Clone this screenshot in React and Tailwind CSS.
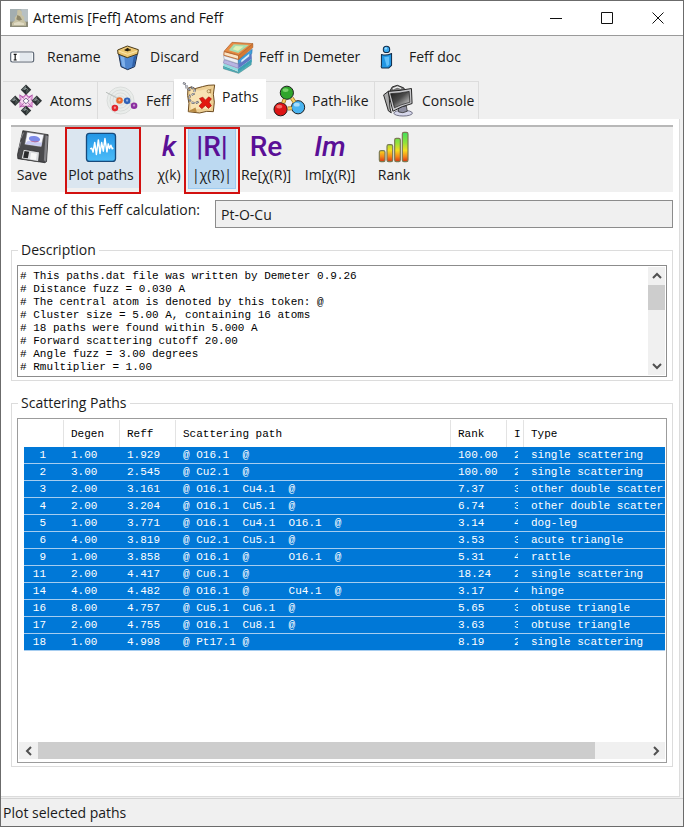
import React from "react";

const UI = "font-['Open_Sans','Noto_Sans',sans-serif]";
const MONO = "font-['Liberation_Mono',monospace]";

function AppIcon() {
  return (
    <svg viewBox="0 0 54 54" className="h-[18px] w-[18px]" aria-hidden="true">
      <rect width="54" height="54" fill="#a3aeb0" />
      <rect x="34" width="20" height="54" fill="#b7c0c3" />
      <rect y="38" width="54" height="16" fill="#8b8a78" />
      <path d="M22 4l8-2 6 7-1 8 8 7-1 9 6 8v9H6v-8l9-8-1-8 7-8z" fill="#c8c2a4" />
      <path d="M22 18l8 4 6 10-9 3-8-4z" fill="#8e876a" />
      <path d="M12 42l14-4 16 5v5H12z" fill="#e0dbc4" />
    </svg>
  );
}

function RenameIcon() {
  return (
    <svg viewBox="24 150 78 42" className="h-[14px] w-[26px]" aria-hidden="true">
      <rect x="29" y="156" width="69" height="30" rx="5" fill="#fff" stroke="#5b6573" strokeWidth="3.5" />
      <path d="M56 159h38v24H56z" fill="#e4e9ee" />
      <path d="M38 163h9M38 180h9M42.500 163v17" stroke="#111" strokeWidth="3.500" />
    </svg>
  );
}

function DiscardIcon() {
  return (
    <svg viewBox="345 130 72 81" className="h-[27px] w-[24px]" aria-hidden="true">
      <path d="M353 160l7 38 20 9 21-9 8-38z" fill="#4f86cf" stroke="#1c2f52" strokeWidth="3" />
      <path d="M358 166l6 30 9 5-3-32z" fill="#7fb0ea" />
      <path d="M398 168l-5 31 7-4 6-31z" fill="#2f5fa5" />
      <path d="M350 148l29-12 33 11-2 13-31 11-28-11z" fill="#edc873" stroke="#4a3a18" strokeWidth="3" />
      <path d="M353 151l27 10 29-10" fill="none" stroke="#fbe7ae" strokeWidth="3" />
      <ellipse cx="380" cy="148" rx="10" ry="3.500" fill="#5c4a1f" />
      <path d="M378 141l6 3-3 8-8-2z" fill="#241b0a" />
    </svg>
  );
}

function BooksIcon() {
  return (
    <svg viewBox="36 30 96 100" className="h-[33px] w-[32px]" aria-hidden="true">
      <path d="M40 106l44 18 40-30v8l-38 26-46-14z" fill="#4bb6bd" stroke="#35727d" strokeWidth="1.500" />
      <path d="M40 98l44 16v8l-44-16z" fill="#8fdde0" />
      <path d="M84 114l42-30v10l-42 30z" fill="#3c9fb5" />
      <path d="M42 86l43 14v13l-45-16z" fill="#b8b4e2" stroke="#6a659f" strokeWidth="1.500" />
      <path d="M85 100l40-32 1 16-41 29z" fill="#5d78c4" />
      <path d="M40 74l45 13v12l-43-14z" fill="#eef0f5" stroke="#7c8ba1" strokeWidth="1.500" />
      <path d="M85 87l42-32-1 13-41 31z" fill="#3d9fdb" stroke="#2366a1" strokeWidth="1.500" />
      <path d="M94 88l24-19v7l-24 19z" fill="#d8ecfa" />
      <path d="M42 62l44 12v12L41 73z" fill="#fae4c4" stroke="#b55a20" strokeWidth="2.500" />
      <path d="M86 74l43-36v12L86 86z" fill="#d77a33" stroke="#9f4f17" strokeWidth="1.500" />
      <path d="M42 61l24-27 63 4-43 35z" fill="#e98b44" stroke="#a75a22" strokeWidth="2" />
      <path d="M56 58l15-18 46 2-32 24z" fill="#a8dcae" />
      <path d="M68 55l9-10 24 2-17 13z" fill="#dff1b8" />
    </svg>
  );
}

function InfoIcon() {
  return (
    <svg viewBox="1144 28 38 74" className="h-[25px] w-[13px]" aria-hidden="true">
      <path d="M1148 56q14 5 30-3v35l-8 8h-21q-3-3-1-8V66z" fill="#2196e3" stroke="#102c49" strokeWidth="3" strokeLinejoin="round" />
      <path d="M1156 64l15-2v24l-7 6z" fill="#5fc0fa" />
      <circle cx="1163" cy="41" r="9.500" fill="#3aa9ef" stroke="#102c49" strokeWidth="3" />
      <circle cx="1161" cy="38" r="3.500" fill="#9adcff" />
    </svg>
  );
}

function AtomsIcon() {
  const gems = [
    [79, 265],
    [79, 329],
    [46, 299],
    [112, 299],
  ];
  return (
    <svg viewBox="30 248 98 100" className="h-[33px] w-[32px]" aria-hidden="true">
      <path d="M79 279l7 8 12-3-3 10 7 6-7 7 2 10-11-2-7 8-7-8-11 2 2-10-7-7 7-6-3-10 12 3z" fill="#f4d5ef" stroke="#c573bd" strokeWidth="4" />
      <path d="M60 280l12 12M98 280l-12 12M60 318l12-12M98 318l-12-12" stroke="#a54f9d" strokeWidth="3" />
      <path d="M70 299l9-8 9 8-9 9z" fill="#fff" stroke="#5c4a74" strokeWidth="2.500" />
      <circle cx="62" cy="289" r="4" fill="#dd9ad6" />
      <circle cx="97" cy="289" r="4" fill="#dd9ad6" />
      <circle cx="62" cy="310" r="4" fill="#dd9ad6" />
      <circle cx="97" cy="310" r="4" fill="#dd9ad6" />
      {gems.map(([x, y]) => (
        <g key={`${x}-${y}`}>
          <path d={`M${x} ${y - 16}l16 16-16 16-16-16z`} fill="#2c3133" />
          <path d={`M${x} ${y - 13}v13h-13z`} fill="#6d7878" />
          <path d={`M${x} ${y}h12l-12 12z`} fill="#48534f" />
          <path d={`M${x - 6} ${y}l6-5 6 5`} fill="none" stroke="#a9b6b2" strokeWidth="2" />
        </g>
      ))}
    </svg>
  );
}

function FeffIcon() {
  const balls = [
    [358, 298, "#ec6a2c"],
    [381, 299, "#2f62b8"],
    [402, 314, "#8b2fa0"],
    [344, 321, "#e0252c"],
  ];
  return (
    <svg viewBox="314 252 106 92" className="h-[31px] w-[35px]" aria-hidden="true">
      <g fill="none" stroke="#c8cdc9" strokeWidth="1.500">
        <circle cx="361" cy="298" r="41" fill="#e9ecea" />
        <circle cx="361" cy="298" r="32" />
        <circle cx="361" cy="298" r="23" />
        <circle cx="361" cy="298" r="14" />
      </g>
      <path d="M317 273l36 20M317 273l84 40" stroke="#a9afab" strokeWidth="1.500" />
      {balls.map(([x, y, c]) => (
        <g key={c}>
          <circle cx={x} cy={y} r="10" fill={c} />
          <circle cx={x} cy={y - 1} r="3.500" fill="#fff" opacity="0.5" />
        </g>
      ))}
    </svg>
  );
}

function MapIcon() {
  return (
    <svg viewBox="546 240 106 100" className="h-[33px] w-[35px]" aria-hidden="true">
      <path d="M567 262l10-4 12 5 22-6 17-4 20-1-4 28 3 24-3 29-20-1-22 5-34-4 2-25-4-24z" fill="#edcf94" stroke="#6b4a1e" strokeWidth="3" strokeLinejoin="round" />
      <path d="M574 267l30 2 34-7-3 33 2 31-28-2-33 2z" fill="#f8e3b4" />
      <path d="M568 332l22-12 4 15zM638 262l-12 8 11 9z" fill="#b98b45" />
      <circle cx="630" cy="271" r="5" fill="#f5dfae" stroke="#8d6a34" strokeWidth="2" />
      <path d="M552 246l10 4 1 11 9 6 7-7 9 6-3 13-12 5-3 11 8 10 12 2 11-5" fill="none" stroke="#4e4f58" strokeWidth="6" strokeDasharray="9 4" />
      <path d="M552 246l10 4 1 11 9 6 7-7 9 6-3 13-12 5-3 11 8 10 12 2 11-5" fill="none" stroke="#c5c7cf" strokeWidth="3" strokeDasharray="9 4" />
      <path d="M602 293l10-4 8 9 10-10 8 6-7 10 7 11-9 8-9-9-11 10-8-8 9-11z" fill="#e3180f" stroke="#a50f0a" strokeWidth="2" />
    </svg>
  );
}

function PathLikeIcon() {
  const balls = [
    [228, 183, "#2fa52c", "#8fe07e"],
    [209, 233, "#dc1414", "#ff8a80"],
    [262, 227, "#4ab4f0", "#c8ecff"],
  ];
  return (
    <svg viewBox="186 160 100 96" className="h-[32px] w-[33px]" aria-hidden="true">
      {balls.map(([x, y, c, hi]) => (
        <g key={c}>
          <circle cx={x} cy={y} r="20" fill={c} stroke="#1c1c1c" strokeWidth="3" />
          <ellipse cx={x - 4} cy={y - 8} rx="9" ry="6" fill={hi} opacity="0.75" />
        </g>
      ))}
      <path d="M221 203l-4 11M243 199l8 12M231 231l12-1" stroke="#a8791d" strokeWidth="12" />
      <path d="M221 203l-4 11M243 199l8 12M231 231l12-1" stroke="#f3cf63" strokeWidth="7" />
    </svg>
  );
}

function ConsoleIcon() {
  return (
    <svg viewBox="512 158 100 104" className="h-[34px] w-[32px]" aria-hidden="true">
      <defs>
        <linearGradient id="crt" x1="0" y1="0" x2="1" y2="1">
          <stop offset="0" stopColor="#1a1a1a" />
          <stop offset="0.45" stopColor="#4b4b4b" />
          <stop offset="1" stopColor="#ececec" />
        </linearGradient>
      </defs>
      <ellipse cx="578" cy="248" rx="29" ry="9" fill="#d5d6ea" stroke="#55566b" strokeWidth="2.500" />
      <path d="M562 228l26-3 3 17q-14 8-27 2z" fill="#8d8ea0" stroke="#333" strokeWidth="2.500" />
      <path d="M536 180l8-14 16-5 20 8 4 8z" fill="#777" stroke="#222" strokeWidth="3" />
      <path d="M546 172l14-6 12 5" stroke="#f4f4f4" strokeWidth="4" fill="none" />
      <path d="M517 191l16-12 4 53 4 15-9-6z" fill="#aaa" stroke="#222" strokeWidth="3" />
      <path d="M531 180q38-2 73-9l2 47q-30 7-60 24z" fill="#c6c6c9" stroke="#1f1f1f" strokeWidth="3" strokeLinejoin="round" />
      <path d="M539 187q30-1 58-7l2 34q-26 6-48 17z" fill="url(#crt)" stroke="#111" strokeWidth="2" />
    </svg>
  );
}

function SaveIcon() {
  return (
    <svg viewBox="46 34 98 102" className="h-[34px] w-[33px]" aria-hidden="true">
      <path d="M66 36l76 12-5 81-5 3-81-12-1-12z" fill="#4a4a4d" stroke="#18181a" strokeWidth="2" strokeLinejoin="round" />
      <path d="M134 50l7 2-5 78-7-5z" fill="#838387" />
      <path d="M79 41l50 7-8 36-49-7z" fill="#f6f7ff" stroke="#888" strokeWidth="1.500" />
      <path d="M81 66l43 6-3 11-48-7z" fill="#c9ccf4" />
      <ellipse cx="101" cy="61" rx="17" ry="9" transform="rotate(8 101 61)" fill="#7d8ae8" />
      <path d="M85 65q14 7 31 2-15 9-31-2z" fill="#e84a50" />
      <path d="M68 92l48 8-3 29-52-9z" fill="#dcdde0" stroke="#222" strokeWidth="2" />
      <path d="M71 97l14 2-4 20-14-2z" fill="#29292b" />
      <path d="M91 102l17 3-3 19-17-3z" fill="#f8f8f8" />
      <path d="M60 60l8-18M55 88l5-19" stroke="#8a8a8e" strokeWidth="3" />
    </svg>
  );
}

function PlotIcon() {
  return (
    <svg viewBox="254 35 96 94" className="h-[31px] w-[32px]" aria-hidden="true">
      <defs>
        <linearGradient id="scope" x1="0" y1="0" x2="0" y2="1">
          <stop offset="0" stopColor="#2396e6" />
          <stop offset="1" stopColor="#4bbcf8" />
        </linearGradient>
      </defs>
      <rect x="258" y="39" width="88" height="85" rx="9" fill="url(#scope)" stroke="#174a7c" strokeWidth="4" />
      <path d="M269 86l5-2 4 12 5-29 5 36 6-44 5 41 5-33 5 26 5-38 6 40 4-24 4 14 4-10 4 11 3-3" fill="none" stroke="#fff" strokeWidth="4.500" strokeLinejoin="round" />
    </svg>
  );
}

function RankIcon() {
  const bars = [
    [451, 96, 33],
    [474, 78, 51],
    [497, 59, 70],
    [520, 41, 88],
  ];
  return (
    <svg viewBox="447 37 96 96" className="h-[32px] w-[32px]" aria-hidden="true">
      <defs>
        <linearGradient id="heat" gradientUnits="userSpaceOnUse" x1="0" y1="41" x2="0" y2="129">
          <stop offset="0" stopColor="#3fe05a" />
          <stop offset="0.35" stopColor="#8fe23c" />
          <stop offset="0.62" stopColor="#f7dc1e" />
          <stop offset="0.82" stopColor="#f58a1c" />
          <stop offset="1" stopColor="#d93412" />
        </linearGradient>
      </defs>
      {bars.map(([x, y, h]) => (
        <rect key={x} x={x} y={y} width="17" height={h} rx="5" fill="url(#heat)" stroke="#7b7a52" strokeWidth="3.500" />
      ))}
    </svg>
  );
}

function Script({ children, slanted }) {
  return (
    <span
      aria-hidden="true"
      className={`font-['Roboto',sans-serif] text-[28px] leading-8 font-medium text-[#5a0f96] ${slanted ? "italic" : ""}`}
    >
      {children}
    </span>
  );
}

function Chevron({ d }) {
  return (
    <svg viewBox="0 0 10 10" className="h-[10px] w-[10px]" aria-hidden="true">
      <path d={d} fill="none" stroke="#505050" strokeWidth="2" />
    </svg>
  );
}

const menu = [
  { label: "Rename", icon: <RenameIcon />, width: "w-[107px]", gap: "gap-3" },
  { label: "Discard", icon: <DiscardIcon />, width: "w-[106px]", gap: "gap-[10px]" },
  { label: "Feff in Demeter", icon: <BooksIcon />, width: "w-[158px]", gap: "gap-[5px]" },
  { label: "Feff doc", icon: <InfoIcon />, width: "w-[90px]", gap: "gap-4" },
];

const tabs = [
  { label: "Atoms", icon: <AtomsIcon />, width: "w-[95px]", gap: "gap-2" },
  { label: "Feff", icon: <FeffIcon />, width: "w-[76px]", gap: "gap-[6px]" },
  { label: "Paths", icon: <MapIcon />, width: "w-[92px]", gap: "gap-[6px]", selected: true },
  { label: "Path-like", icon: <PathLikeIcon />, width: "w-[109px]", gap: "gap-[6px]" },
  { label: "Console", icon: <ConsoleIcon />, width: "w-[104px]", gap: "gap-2" },
];

const tools = [
  { label: "Save", icon: <SaveIcon />, box: "w-[42px]" },
  { label: "Plot paths", icon: <PlotIcon />, box: "ml-3 w-[76px] bg-[#dbe6f0] pr-1", marked: "inset-x-0" },
  { label: "χ(k)", icon: <Script slanted>k</Script>, box: "ml-3 w-8" },
  { label: "|χ(R)|", icon: <Script>|R|</Script>, box: "ml-1 w-[46px] bg-[#bcd9f1] outline outline-[#9ccbf2]", marked: "-inset-x-[5px]" },
  { label: "Re[χ(R)]", icon: <Script>Re</Script>, box: "ml-1 w-[54px]" },
  { label: "Im[χ(R)]", icon: <Script slanted>Im</Script>, box: "ml-[10px] w-[54px]" },
  { label: "Rank", icon: <RankIcon />, box: "ml-[19px] w-9" },
];

const description = [
  "# This paths.dat file was written by Demeter 0.9.26",
  "# Distance fuzz = 0.030 A",
  "# The central atom is denoted by this token: @",
  "# Cluster size = 5.00 A, containing 16 atoms",
  "# 18 paths were found within 5.000 A",
  "# Forward scattering cutoff 20.00",
  "# Angle fuzz = 3.00 degrees",
  "# Rmultiplier = 1.00",
].join("\n");

const rows = [
  ["1", "1.00", "1.929", "@ O16.1  @", "100.00", "2", "single scattering"],
  ["2", "3.00", "2.545", "@ Cu2.1  @", "100.00", "2", "single scattering"],
  ["3", "2.00", "3.161", "@ O16.1  Cu4.1  @", "7.37", "3", "other double scatter"],
  ["4", "2.00", "3.204", "@ O16.1  Cu5.1  @", "6.74", "3", "other double scatter"],
  ["5", "1.00", "3.771", "@ O16.1  Cu4.1  O16.1  @", "3.14", "4", "dog-leg"],
  ["6", "4.00", "3.819", "@ Cu2.1  Cu5.1  @", "3.53", "3", "acute triangle"],
  ["9", "1.00", "3.858", "@ O16.1  @      O16.1  @", "5.31", "4", "rattle"],
  ["11", "2.00", "4.417", "@ Cu6.1  @", "18.24", "2", "single scattering"],
  ["14", "4.00", "4.482", "@ O16.1  @      Cu4.1  @", "3.17", "4", "hinge"],
  ["16", "8.00", "4.757", "@ Cu5.1  Cu6.1  @", "5.65", "3", "obtuse triangle"],
  ["17", "2.00", "4.755", "@ O16.1  Cu8.1  @", "3.63", "3", "obtuse triangle"],
  ["18", "1.00", "4.998", "@ Pt17.1 @", "8.19", "2", "single scattering"],
];

const headers = ["", "Degen", "Reff", "Scattering path", "Rank", "I", "Type"];

export default function App() {
  return (
    <div className={`flex min-h-screen flex-col border border-[#6b6b6b] bg-[#f0f0f0] text-sm leading-5 text-[#1a1a1a] ${UI}`}>
      <header className="flex h-[35px] items-center border-b border-[#9a9a9a] bg-white pl-[9px] text-[#111]">
        <AppIcon />
        <h1 className="ml-[5px] flex-1">Artemis [Feff] Atoms and Feff</h1>
        <button type="button" aria-label="Minimize" className="flex h-8 w-[51px] items-center justify-center">
          <svg viewBox="0 0 12 12" className="h-3 w-3"><path d="M0 6.500h12" stroke="#111" /></svg>
        </button>
        <button type="button" aria-label="Maximize" className="flex h-8 w-[51px] items-center justify-center">
          <svg viewBox="0 0 12 12" className="h-3 w-3"><path d="M.5.5h11v11H.5z" fill="none" stroke="#111" /></svg>
        </button>
        <button type="button" aria-label="Close" className="flex h-8 w-[51px] items-center justify-center">
          <svg viewBox="0 0 12 12" className="h-3 w-3"><path d="M.5.5l11 11M11.500.5l-11 11" stroke="#111" /></svg>
        </button>
      </header>

      <nav aria-label="Calculation" className="flex h-[43px] items-start pl-2">
        {menu.map((m) => (
          <button key={m.label} type="button" className={`flex h-[42px] items-center whitespace-nowrap ${m.width} ${m.gap}`}>
            {m.icon}
            {m.label}
          </button>
        ))}
      </nav>

      <div role="tablist" className="flex h-10 items-end pl-[2px]">
        {tabs.map((t) => (
          <button
            key={t.label}
            type="button"
            role="tab"
            aria-selected={Boolean(t.selected)}
            className={`flex items-center whitespace-nowrap pl-[7px] ${t.width} ${t.gap} ${
              t.selected ? "h-10 bg-white pb-1" : "h-[38px] border-t border-r border-[#dcdcdc]"
            }`}
          >
            {t.icon}
            {t.label}
          </button>
        ))}
      </div>

      <main className="mr-[3px] flex flex-1 flex-col border-r border-b border-[#dcdcdc] bg-white pt-[6px] pr-[6px] pb-[29px] pl-[10px]">
        <div role="toolbar" aria-label="Plotting" className="flex h-[67px] items-start border-t-2 border-[#b8b8b8] bg-[#f0f0f0]">
          {tools.map((t) => (
            <button key={t.label} type="button" className={`relative mt-[2px] flex h-[59px] flex-col items-center whitespace-nowrap ${t.box}`}>
              <span className="flex h-9 items-center justify-center">{t.icon}</span>
              <span>{t.label}</span>
              {t.marked && <span className={`absolute -top-[2px] h-[67px] border-2 border-[#d2100f] ${t.marked}`} />}
            </button>
          ))}
        </div>

        <div className="mt-2 flex items-start">
          <label htmlFor="calc" className="w-[204px]">Name of this Feff calculation:</label>
          <input
            id="calc"
            readOnly
            value="Pt-O-Cu"
            className="h-7 min-w-0 flex-1 border border-[#8c8c8c] bg-[#f0f0f0] px-[5px]"
          />
        </div>

        <fieldset className="mt-3 min-w-0 border border-[#dcdcdc] px-[5px] pb-[3px]">
          <legend className="ml-[1px] px-[3px]">Description</legend>
          <div className="mt-[5px] flex h-28 border border-[#8c8c8c] p-[1px]">
            <textarea
              readOnly
              aria-label="Description"
              value={description}
              className={`min-w-0 flex-1 resize-none overflow-hidden pt-[3px] pl-[1px] text-[11px] leading-[13px] text-black ${MONO}`}
            />
            <div className="flex w-[17px] flex-col items-center bg-[#f0f0f0]">
              <button type="button" aria-label="Scroll up" className="flex h-[18px] items-center"><Chevron d="M1 7l4-4 4 4" /></button>
              <div className="h-[25px] w-full bg-[#cdcdcd]" />
              <div className="flex-1" />
              <button type="button" aria-label="Scroll down" className="flex h-[18px] items-center"><Chevron d="M1 3l4 4 4-4" /></button>
            </div>
          </div>
        </fieldset>

        <fieldset className="mt-3 min-w-0 flex-1 border border-[#dcdcdc] px-[5px] pb-[3px]">
          <legend className="ml-[1px] px-[3px]">Scattering Paths</legend>
          <div className="mt-[5px] flex min-h-[345px] flex-col border border-[#9c9c9c] p-[1px]">
            <div className="flex-1 overflow-hidden pl-[5px]">
              <table className={`w-full table-fixed border-separate border-spacing-0 text-left text-[11px] leading-4 whitespace-pre ${MONO}`}>
                <colgroup>
                  <col className="w-10" />
                  <col className="w-14" />
                  <col className="w-14" />
                  <col className="w-[275px]" />
                  <col className="w-14" />
                  <col className="w-[17px]" />
                  <col />
                </colgroup>
                <thead>
                  <tr className="h-[27px]">
                    {headers.map((h, i) => (
                      <th key={i} className={`p-0 pl-[7px] font-normal text-black ${i < 6 ? "border-r border-[#e3e3e3]" : ""}`}>{h}</th>
                    ))}
                  </tr>
                </thead>
                <tbody className="text-white">
                  {rows.map((r) => (
                    <tr key={r[0]} className="bg-[#0078d7]">
                      {r.map((c, i) => (
                        <td
                          key={i}
                          className={`border-b border-[#a6cdf0] p-0 ${i === 0 ? "pr-[18px] text-right" : "pl-[7px]"}`}
                        >
                          <div className={i === 5 ? "w-1 overflow-hidden" : ""}>{c}</div>
                        </td>
                      ))}
                    </tr>
                  ))}
                </tbody>
              </table>
            </div>
            <div className="mb-[2px] flex h-[17px] items-center bg-[#f0f0f0]">
              <button type="button" aria-label="Scroll left" className="flex w-[19px] justify-center"><Chevron d="M7 1L3 5l4 4" /></button>
              <div className="h-full flex-11 bg-[#cdcdcd]" />
              <div className="flex-1" />
              <button type="button" aria-label="Scroll right" className="flex w-[19px] justify-center"><Chevron d="M3 1l4 4-4 4" /></button>
            </div>
          </div>
        </fieldset>
      </main>

      <footer className="mt-[1px] border-t border-[#d4d4d4] pt-1 pb-[3px] pl-[2px]">Plot selected paths</footer>
    </div>
  );
}
